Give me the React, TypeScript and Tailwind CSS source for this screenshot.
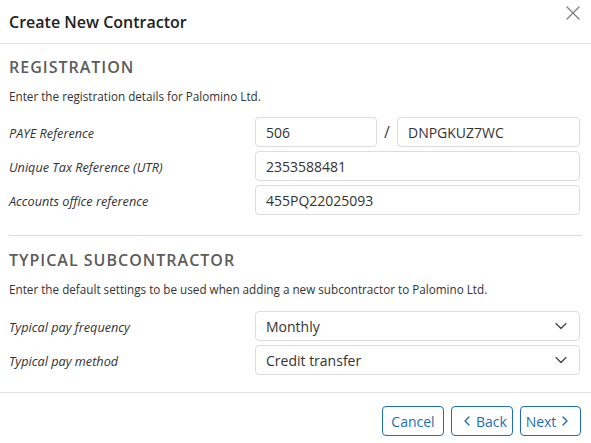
import { ChevronDown, ChevronLeft, ChevronRight, X } from "lucide-react";

function TextBox({ value, className = "" }: { value: string; className?: string }) {
  return (
    <div className={`h-[30px] flex items-center px-[10px] border border-[#dcdcdc] rounded-[4px] text-[14px] text-[#333] bg-white ${className}`}>
      {value}
    </div>
  );
}

function SelectBox({ value }: { value: string }) {
  return (
    <div className="h-[30px] flex-1 flex items-center justify-between pl-[10px] pr-[8px] border border-[#dcdcdc] rounded-[4px] text-[14px] text-[#333] bg-white">
      <span>{value}</span>
      <ChevronDown size={20} strokeWidth={1.5} className="text-[#444]" />
    </div>
  );
}

function Row({ label, children }: { label: string; children: React.ReactNode }) {
  return (
    <div className="flex items-center h-[30px]">
      <div className="w-[246px] pt-[3px] text-[12.7px] italic text-[#333]">{label}</div>
      <div className="flex-1 flex items-center">{children}</div>
    </div>
  );
}

export default function App() {
  return (
    <div
      className="w-[591px] h-[443px] bg-white flex flex-col overflow-hidden"
      style={{ fontFamily: '"Open Sans", "Noto Sans", sans-serif' }}
    >
      {/* Header */}
      <div className="h-[44px] shrink-0 flex justify-between pl-[9px] pr-[6px] border-b border-[#e3e3e3]">
        <h1 className="self-center text-[16px] font-semibold text-[#222]">Create New Contractor</h1>
        <X size={24} strokeWidth={1.4} className="text-[#808080] mt-[1px]" />
      </div>

      {/* Registration */}
      <div className="px-[9px] pr-[11px]">
        <h2 className="mt-[12px] text-[16px] font-semibold text-[#5c5c5c] tracking-[1px] leading-[22px]">REGISTRATION</h2>
        <p className="mt-[10px] text-[11.7px] text-[#333] leading-[16px]">Enter the registration details for Palomino Ltd.</p>
        <div className="mt-[13px] flex flex-col gap-[4px]">
          <Row label="PAYE Reference">
            <TextBox value="506" className="w-[122px]" />
            <span className="w-[20px] text-center text-[16px] text-[#444]">/</span>
            <TextBox value="DNPGKUZ7WC" className="flex-1" />
          </Row>
          <Row label="Unique Tax Reference (UTR)">
            <TextBox value="2353588481" className="flex-1" />
          </Row>
          <Row label="Accounts office reference">
            <TextBox value="455PQ22025093" className="flex-1" />
          </Row>
        </div>
      </div>

      <div className="mt-[20px] mx-[9px] border-t border-[#d9d9d9]" />

      {/* Typical subcontractor */}
      <div className="px-[9px] pr-[11px]">
        <h2 className="mt-[13px] text-[16px] font-semibold text-[#5c5c5c] tracking-[1px] leading-[22px]">TYPICAL SUBCONTRACTOR</h2>
        <p className="mt-[10px] text-[11.7px] text-[#333] leading-[16px]">
          Enter the default settings to be used when adding a new subcontractor to Palomino Ltd.
        </p>
        <div className="mt-[14px] flex flex-col gap-[4px]">
          <Row label="Typical pay frequency">
            <SelectBox value="Monthly" />
          </Row>
          <Row label="Typical pay method">
            <SelectBox value="Credit transfer" />
          </Row>
        </div>
      </div>

      {/* Footer */}
      <div className="mt-[17px] border-t border-[#e3e3e3] flex justify-end gap-[7px] pt-[13px] pr-[10px]">
        <button className="h-[30px] w-[62px] border border-[#1c6fb3] rounded-[4px] text-[14px] text-[#1c6fb3]">Cancel</button>
        <button className="h-[30px] w-[62px] pl-[2px] border border-[#1c6fb3] rounded-[4px] text-[14px] text-[#1c6fb3] flex items-center justify-center gap-[1px]">
          <ChevronLeft size={16} strokeWidth={2} />
          Back
        </button>
        <button className="h-[30px] w-[61px] pr-[2px] border border-[#1c6fb3] rounded-[4px] text-[14px] text-[#1c6fb3] flex items-center justify-center gap-[1px]">
          Next
          <ChevronRight size={16} strokeWidth={2} />
        </button>
      </div>
    </div>
  );
}
